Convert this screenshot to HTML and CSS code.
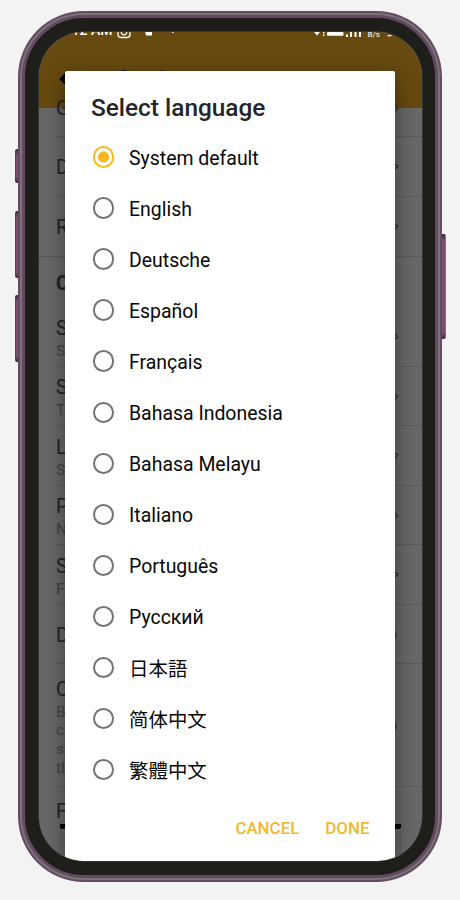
FILE: index.html
```html
<!DOCTYPE html>
<html lang="en">
<head>
<meta charset="utf-8">
<title>Select language</title>
<link rel="stylesheet" href="styles.css">
</head>
<body>
<main class="phone">
  <i class="key key-mute"></i><i class="key key-up"></i><i class="key key-down"></i><i class="key key-power"></i>
  <div class="ring"><div class="ring-mid"><div class="ring-inner"><div class="screen">
    <header class="appbar">
      <div class="status">
        <span class="clock">12 AM</span>
        <svg class="status-icons" width="320" height="14" viewBox="0 0 320 14" fill="#fff">
          <rect x="8" y="-3" width="12" height="11.500" rx="3.200" fill="none" stroke="#fff" stroke-width="1.300"/>
          <circle cx="14" cy="3" r="2.800" fill="none" stroke="#fff" stroke-width="1.200"/>
          <path d="M35 2h7v4.500h-6zM62 2.500h1.500V4H62z"/>
          <path d="M204 3h6l-3 3.500zM213 3h1.500v1.500H213zM213 5.500h1.500V7H213z"/>
          <rect x="217" y="3" width="16.500" height="3.800" rx="1"/>
          <path d="M236 5.500h2V8h-2zM240 3h2v5h-2zM244.500 3h2v5h-2zM249 3h2v5h-2z"/>
          <path d="M277.500 6h4v1.200h-4z"/>
        </svg>
        <span class="rate">B/s</span>
      </div>
      <div class="appbar-title">
        <svg width="18" height="16" viewBox="0 0 18 16" fill="none" stroke="#000" stroke-width="2.500"><path d="M9 1L2 8l7 7M2 8h16"/></svg>
        <span>Settings</span>
      </div>
    </header>
    <section class="settings">
      <div class="row row-cut"><span>G</span><b class="chev"></b></div>
      <div class="row"><span>D</span><b class="chev"></b></div>
      <div class="row row-full"><span>R</span><b class="chev"></b></div>
      <h2 class="group">C</h2>
      <div class="row"><span>S<small>S</small></span><b class="chev"></b></div>
      <div class="row"><span>S<small>T</small></span><b class="chev"></b></div>
      <div class="row"><span>L<small>S</small></span><b class="chev"></b></div>
      <div class="row"><span>P<small>N</small></span><b class="chev"></b></div>
      <div class="row"><span>S<small>F</small></span><b class="chev"></b></div>
      <div class="row"><span>D</span><b class="knob"></b></div>
      <div class="row row-tall"><span>C<small>B</small><small>c</small><small>sl</small><small>th</small></span><b class="knob"></b></div>
      <div class="row row-last"><span>F</span></div>
      <div class="banner"></div>
    </section>
    <form class="dialog">
      <h1>Select language</h1>
      <label class="option"><i class="radio radio-on"></i><span>System default</span></label>
      <label class="option"><i class="radio"></i><span>English</span></label>
      <label class="option"><i class="radio"></i><span>Deutsche</span></label>
      <label class="option"><i class="radio"></i><span>Español</span></label>
      <label class="option"><i class="radio"></i><span>Français</span></label>
      <label class="option"><i class="radio"></i><span>Bahasa Indonesia</span></label>
      <label class="option"><i class="radio"></i><span>Bahasa Melayu</span></label>
      <label class="option"><i class="radio"></i><span>Italiano</span></label>
      <label class="option"><i class="radio"></i><span>Português</span></label>
      <label class="option"><i class="radio"></i><span>Русский</span></label>
      <label class="option" lang="ja"><i class="radio"></i>日本語</label>
      <label class="option" lang="zh-Hans"><i class="radio"></i>简体中文</label>
      <label class="option" lang="zh-Hant"><i class="radio"></i>繁體中文</label>
      <footer class="actions"><span>CANCEL</span><span>DONE</span></footer>
    </form>
  </div></div></div></div>
</main>
</body>
</html>
```
FILE: styles.css
```css
* { box-sizing: border-box; }
body {
  margin: 0;
  height: 900px;
  overflow: hidden;
  background: #f3f3f3;
  font-family: Roboto, "Noto Sans CJK SC", sans-serif;
}
.phone { position: relative; width: 424px; height: 871px; margin: 11px 0 0 18px; }
.ring { position: relative; height: 100%; padding: 2px; border-radius: 66px; background: #654a63; }
.ring-mid { height: 100%; padding: 2px; border-radius: 64px; background: #777576; }
.ring-inner {
  height: 100%;
  padding: 13.500px 13.500px 14px;
  border: 3px solid #654861;
  border-radius: 62px;
  background: #1e1f1b;
}
.screen {
  position: relative;
  height: 829.500px;
  overflow: hidden;
  border-radius: 45px;
  background: #686868;
  box-shadow: 0 0 0 .5px #4b4b4b;
}

.key {
  position: absolute;
  left: -3.500px;
  width: 4px;
  border-left: 1px solid #5b3b57;
  border-radius: 2px 0 0 2px;
  background: linear-gradient(#3b2238, #76506f 6px, #76506f calc(100% - 6px), #3b2238);
}
.key-mute { top: 138px; height: 34px; }
.key-up { top: 200px; height: 67px; }
.key-down { top: 284px; height: 67px; }
.key-power { left: auto; right: -4px; top: 223px; height: 105px; border-left: 0; border-right: 1px solid #8b6785; border-radius: 0 2px 2px 0; }

.appbar { height: 76px; background: #664a0f; color: #fff; }
.status { position: relative; height: 38.500px; }
.clock { position: absolute; left: 33px; top: -11px; font-size: 14px; line-height: 18px; font-weight: 500; }
.status-icons { position: absolute; left: 71.500px; top: -3px; }
.rate { position: absolute; left: 329px; top: -2px; font-size: 8px; line-height: 10px; }
.appbar-title { display: flex; align-items: center; gap: 40px; padding-left: 20.500px; height: 18px; font-size: 23px; font-weight: 500; color: #17101f; }

.settings { color: #222; font-size: 19.500px; }
.row {
  display: flex;
  align-items: center;
  justify-content: space-between;
  height: 59.500px;
  margin-left: 17.500px;
  padding-right: 23px;
  border-bottom: 1px solid #5b5b5b;
  line-height: 24px;
}
.row span { padding-top: 4px; }
.row small { position: relative; top: 1px; display: block; color: #444; font-size: 15.500px; line-height: 18.800px; }
.row-cut { height: 29.500px; align-items: flex-start; }
.row-cut span { margin-top: -15px; }
.row-cut .chev { margin-top: -2.500px; }
.row-full { height: 60px; margin-left: 0; padding-left: 17.500px; }
.group { height: 50.500px; margin: 0; padding: 15px 0 0 17.500px; font-size: 19.500px; line-height: 24px; }
.row-tall { height: 122.500px; }
.row-tall span { padding-top: 5px; }
.row-last { height: 37px; border: 0; padding-top: 10px; }
.chev { width: 7px; height: 7px; margin: 1px 1.500px 0 0; border: solid #292929; border-width: 1.500px 1.500px 0 0; transform: rotate(45deg); }
.knob { width: 14px; height: 14px; margin: 2px 2px 0 0; border-radius: 50%; background: #444; }
.banner {
  width: 341px;
  height: 40px;
  margin-left: 21px;
  background: linear-gradient(#000 5px, transparent 5px);
  border: solid #606060;
  border-width: 0 1px;
  background-origin: border-box;
}
.banner { border-image: linear-gradient(#000 5px, #606060 5px) 1; }

.dialog {
  position: absolute;
  left: 26.500px;
  top: 39.500px;
  display: flex;
  flex-direction: column;
  width: 330px;
  height: 790px;
  margin: 0;
  padding: 23px 26px 0;
  border-radius: 2px;
  background: #fff;
  color: #080808;
  box-shadow: 0 7px 22px rgba(0, 0, 0, .42);
}
h1 { margin: 0 0 9.500px; color: #252529; font-size: 24.400px; line-height: 28px; font-weight: 500; white-space: nowrap; }
.option { display: flex; flex: none; align-items: center; gap: 15px; height: 51.050px; font-size: 19.450px; white-space: nowrap; }
.option span { padding-top: 2px; }
.radio { width: 21.500px; height: 21.500px; margin-left: 1.500px; border: 2px solid #737373; border-radius: 50%; }
.radio-on { border-color: #fdb71e; background: radial-gradient(circle, #fdb71e 5px, transparent 6px); }
[lang="ja"] { font-family: "Noto Sans CJK JP", sans-serif; }
[lang="zh-Hans"] { font-family: "Noto Sans CJK SC", sans-serif; }
[lang="zh-Hant"] { font-family: "Noto Sans CJK TC", sans-serif; }
.actions { display: flex; justify-content: flex-end; gap: 26px; margin: 23px -.5px 0 0; color: #f3b82f; font-size: 16.900px; line-height: 20px; font-weight: 500; }
```
